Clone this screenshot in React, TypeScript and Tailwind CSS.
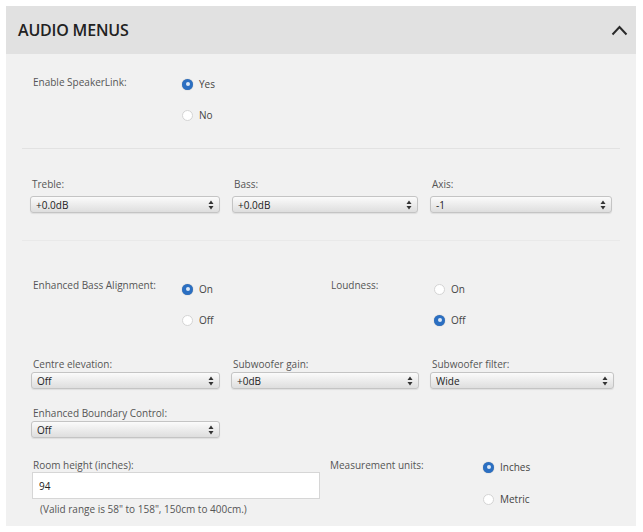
import React from 'react'

const sans = "font-['Open_Sans',sans-serif]"

function Radio({ checked, label }: { checked?: boolean; label: string }) {
  return (
    <div className="flex items-center h-[14px] gap-[6px]">
      {checked ? (
        <span className="w-[11px] h-[11px] rounded-full bg-[#2b6fc2] flex items-center justify-center shadow-[0_0_1px_rgba(0,0,0,0.4)]">
          <span className="w-[4px] h-[4px] rounded-full bg-[#dce8f6]" />
        </span>
      ) : (
        <span className="w-[11px] h-[11px] rounded-full bg-white border border-[#d4d4d4]" />
      )}
      <span className="text-[10px] text-[#444]">{label}</span>
    </div>
  )
}

function Select({ value }: { value: string }) {
  return (
    <div className="h-[17px] flex items-center justify-between rounded-[3px] border border-[#c4c4c4] bg-gradient-to-b from-[#fbfbfb] to-[#dedede] pl-[5px] pr-[5px] shadow-[0_1px_1px_rgba(0,0,0,0.08)]">
      <span className="text-[10px] text-[#222] leading-none">{value}</span>
      <svg width="6" height="10" viewBox="0 0 6 10">
        <path d="M3 0.5 L5.5 4 L0.5 4 Z" fill="#333" />
        <path d="M3 9.5 L5.5 6 L0.5 6 Z" fill="#333" />
      </svg>
    </div>
  )
}

function Field({ label, value }: { label: string; value: string }) {
  return (
    <div className="flex flex-col">
      <span className="text-[10px] leading-[14px] text-[#555] pl-[2px]">{label}</span>
      <div className="mt-[5px]">
        <Select value={value} />
      </div>
    </div>
  )
}

export default function App() {
  return (
    <div className={`min-h-[532px] bg-white pt-[6px] pl-[6px] ${sans}`}>
      <div className="w-[630px] bg-[#f1f1f1]">
        <div className="h-[48px] bg-[#e1e1e1] flex items-center justify-between pl-[12px] pr-[8px]">
          <h2 className="text-[16px] font-semibold text-[#222] tracking-[-0.2px]">AUDIO MENUS</h2>
          <svg width="17" height="11" viewBox="0 0 17 11">
            <path d="M1.5 9.5 L8.5 2 L15.5 9.5" fill="none" stroke="#2a2a2a" strokeWidth="2" />
          </svg>
        </div>

        <div className="pt-[21px] pl-[27px] flex">
          <span className="w-[149px] text-[10px] leading-[14px] text-[#555]">Enable SpeakerLink:</span>
          <div className="mt-[2px] flex flex-col gap-[17px]">
            <Radio checked label="Yes" />
            <Radio label="No" />
          </div>
        </div>

        <div className="mt-[26px] ml-[16px] w-[598px] h-px bg-[#e2e2e2]" />

        <div className="mt-[28px] ml-[24px] grid grid-cols-[190px_186px_182px] gap-x-[12px]">
          <Field label="Treble:" value="+0.0dB" />
          <Field label="Bass:" value="+0.0dB" />
          <Field label="Axis:" value="-1" />
        </div>

        <div className="mt-[27px] ml-[16px] w-[598px] h-px bg-[#e9e9e9]" />

        <div className="mt-[37px] pl-[27px] flex">
          <div className="w-[298px] flex">
            <span className="w-[149px] text-[10px] leading-[14px] text-[#555]">Enhanced Bass Alignment:</span>
            <div className="mt-[4px] flex flex-col gap-[17px]">
              <Radio checked label="On" />
              <Radio label="Off" />
            </div>
          </div>
          <div className="flex">
            <span className="w-[103px] text-[10px] leading-[14px] text-[#555]">Loudness:</span>
            <div className="mt-[4px] flex flex-col gap-[17px]">
              <Radio label="On" />
              <Radio checked label="Off" />
            </div>
          </div>
        </div>

        <div className="mt-[30px] ml-[25px] grid grid-cols-[189px_188px_184px] gap-x-[11px]">
          {[
            { label: 'Centre elevation:', value: 'Off' },
            { label: 'Subwoofer gain:', value: '+0dB' },
            { label: 'Subwoofer filter:', value: 'Wide' },
          ].map(f => (
            <div key={f.label} className="flex flex-col">
              <span className="text-[10px] leading-[14px] text-[#555] pl-[2px]">{f.label}</span>
              <div className="mt-px">
                <Select value={f.value} />
              </div>
            </div>
          ))}
        </div>

        <div className="mt-[17px] ml-[25px] w-[189px] flex flex-col">
          <span className="text-[10px] leading-[14px] text-[#555] pl-[2px]">Enhanced Boundary Control:</span>
          <div className="mt-px">
            <Select value="Off" />
          </div>
        </div>

        <div className="mt-[20px] pl-[26px] pb-[10px] flex">
          <div className="w-[288px] flex flex-col">
            <span className="text-[10px] leading-[14px] text-[#555] pl-px">Room height (inches):</span>
            <input
              readOnly
              value="94"
              className="h-[27px] w-full bg-white border border-[#d6d6d6] px-[6px] text-[10px] text-[#222] outline-none"
            />
            <span className="mt-[3px] pl-[8px] text-[10px] leading-[14px] text-[#555]">
              (Valid range is 58" to 158", 150cm to 400cm.)
            </span>
          </div>
          <div className="ml-[10px] flex">
            <span className="w-[153px] text-[10px] leading-[14px] text-[#555]">Measurement units:</span>
            <div className="mt-[2px] flex flex-col gap-[18px]">
              <Radio checked label="Inches" />
              <Radio label="Metric" />
            </div>
          </div>
        </div>
      </div>
    </div>
  )
}
